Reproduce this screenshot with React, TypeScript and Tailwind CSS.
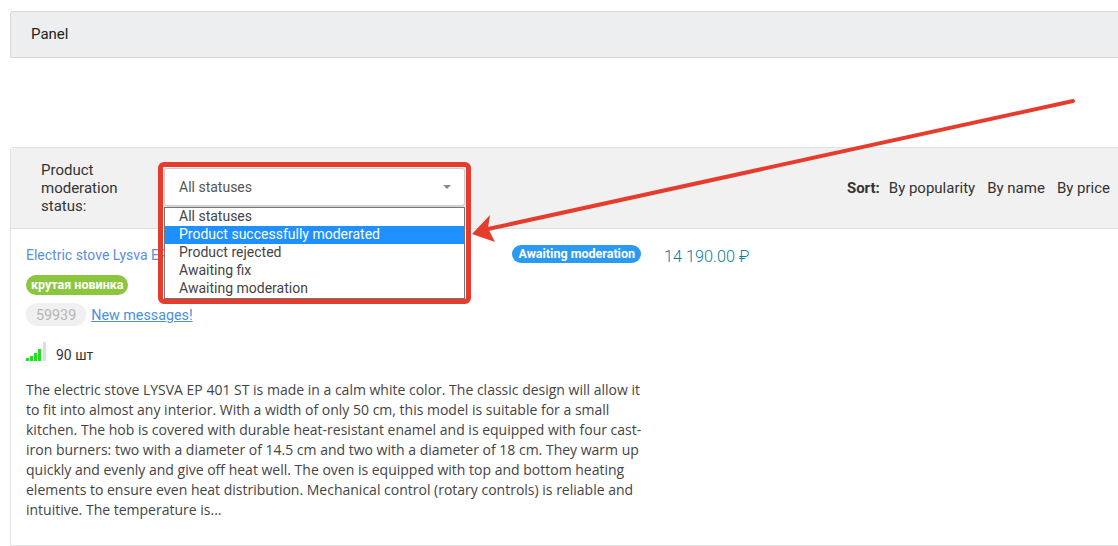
const options = [
  "All statuses",
  "Product successfully moderated",
  "Product rejected",
  "Awaiting fix",
  "Awaiting moderation",
];

const roboto = "font-['Roboto',sans-serif]";
const openSans = "font-['Open_Sans',sans-serif]";

function SignalBars() {
  return (
    <svg width="20" height="19" viewBox="0 0 20 19" className="mb-[8px] block">
      <rect x="0" y="16" width="3" height="3" fill="#1fe01f" />
      <rect x="4" y="14" width="3" height="5" fill="#1fe01f" />
      <rect x="8" y="11" width="3" height="8" fill="#1fe01f" />
      <rect x="12" y="7" width="3" height="12" fill="#1fe01f" />
      <rect x="17" y="0" width="3" height="19" fill="#dddddd" />
    </svg>
  );
}

export default function App() {
  return (
    <div className={`relative h-[546px] w-[1118px] overflow-hidden bg-white pl-[10px] pt-[11px] ${roboto}`}>
      {/* Top panel */}
      <div className="flex h-[47px] w-[1130px] items-center rounded-tl-[3px] border border-[#d8d9db] bg-[#eceef0] pl-[20px] text-[15px] text-[#222]">
        Panel
      </div>

      {/* Moderation panel */}
      <div className="mt-[89px] h-[399px] w-[1130px] rounded-tl-[3px] border border-[#e2e2e2]">
        <div className="flex h-[81px] items-center border-b border-[#dfdfdf] bg-[#f1f1f1] pl-[30px] pr-[22px] text-[15px] text-[#333]">
          <div className="w-[100px] leading-[18px]">
            Product
            <br />
            moderation
            <br />
            status:
          </div>
          <div className="mb-[2px] ml-[23px] flex h-[38px] w-[301px] items-center justify-between rounded-[3px] border border-[#ccc] bg-white pl-[14px] pr-[13px] text-[14px] text-[#555] shadow-[0_1px_2px_rgba(0,0,0,0.15)]">
            All statuses
            <span className="h-0 w-0 border-x-[4px] border-t-[4px] border-x-transparent border-t-[#888]" />
          </div>
          <div className="ml-auto mr-[7px] flex gap-[12px] text-[#333]">
            <span className="font-bold">Sort:</span>
            <span className="-ml-[3px]">By popularity</span>
            <span>By name</span>
            <span>By price</span>
          </div>
        </div>

        <div className="flex pl-[15px] pt-[15px]">
          <div className="w-[615px] shrink-0">
            <div className="flex items-start justify-between">
              <a className="mt-[1px] text-[14px] leading-[20px] text-[#5b8fd8]">Electric stove Lysva EP 401 ST</a>
              <span className="mt-[1px] rounded-full bg-[#2b9af3] px-[6px] text-[12.5px] font-bold leading-[18px] text-white">
                Awaiting moderation
              </span>
            </div>
            <div className="mt-[10px] w-fit rounded-full bg-[#8cc63f] px-[5px] text-[12.5px] font-bold leading-[20px] text-white">
              крутая новинка
            </div>
            <div className="mt-[8px] flex items-center gap-[5px] text-[14.3px]">
              <span className="rounded-full bg-[#f0f0f0] px-[10px] pt-[1px] leading-[22px] text-[#b5b5b5]">59939</span>
              <a className="mt-[2px] text-[#4a8fe0] underline">New messages!</a>
            </div>
            <div className="mt-[16px] flex items-center gap-[10px] text-[14px] text-[#333]">
              <SignalBars />
              90 шт
            </div>
            <p className={`mt-[11px] w-[625px] text-[14px] leading-[20px] text-[#444] ${openSans}`}>
              The electric stove LYSVA EP 401 ST is made in a calm white color. The classic design will allow it to fit
              into almost any interior. With a width of only 50 cm, this model is suitable for a small kitchen. The hob
              is covered with durable heat-resistant enamel and is equipped with four cast-iron burners: two with a
              diameter of 14.5 cm and two with a diameter of 18 cm. They warm up quickly and evenly and give off heat
              well. The oven is equipped with top and bottom heating elements to ensure even heat distribution.
              Mechanical control (rotary controls) is reliable and intuitive. The temperature is...
            </p>
          </div>
          <div className="ml-[23px] mt-[3px] text-[16.3px] font-light leading-[20px] text-[#0f7a9a]">14 190.00 ₽</div>
        </div>
      </div>

      {/* Open select list */}
      <div className="absolute left-[164px] top-[207px] w-[301px] border border-[#767676] bg-white text-[14px] text-[#444]">
        {options.map((o, i) => (
          <div
            key={o}
            className={i === 1 ? "bg-[#1e90ff] pb-[2px] pl-[14px] leading-[16px] text-white" : "pb-[2px] pl-[14px] leading-[16px]"}
          >
            {o}
          </div>
        ))}
      </div>

      {/* Annotation */}
      <div className="absolute left-[158px] top-[162px] h-[142px] w-[313px] rounded-[6px] border-[5px] border-[#e53c2e]" />
      <svg className="absolute left-0 top-0" width="1118" height="546" viewBox="0 0 1118 546" fill="none">
        <path d="M1073 101 L488 229" stroke="#e53c2e" strokeWidth="4" strokeLinecap="round" />
        <path d="M472 234 L490 215 L488 228 L495 242 Z" fill="#e53c2e" />
      </svg>
    </div>
  );
}
